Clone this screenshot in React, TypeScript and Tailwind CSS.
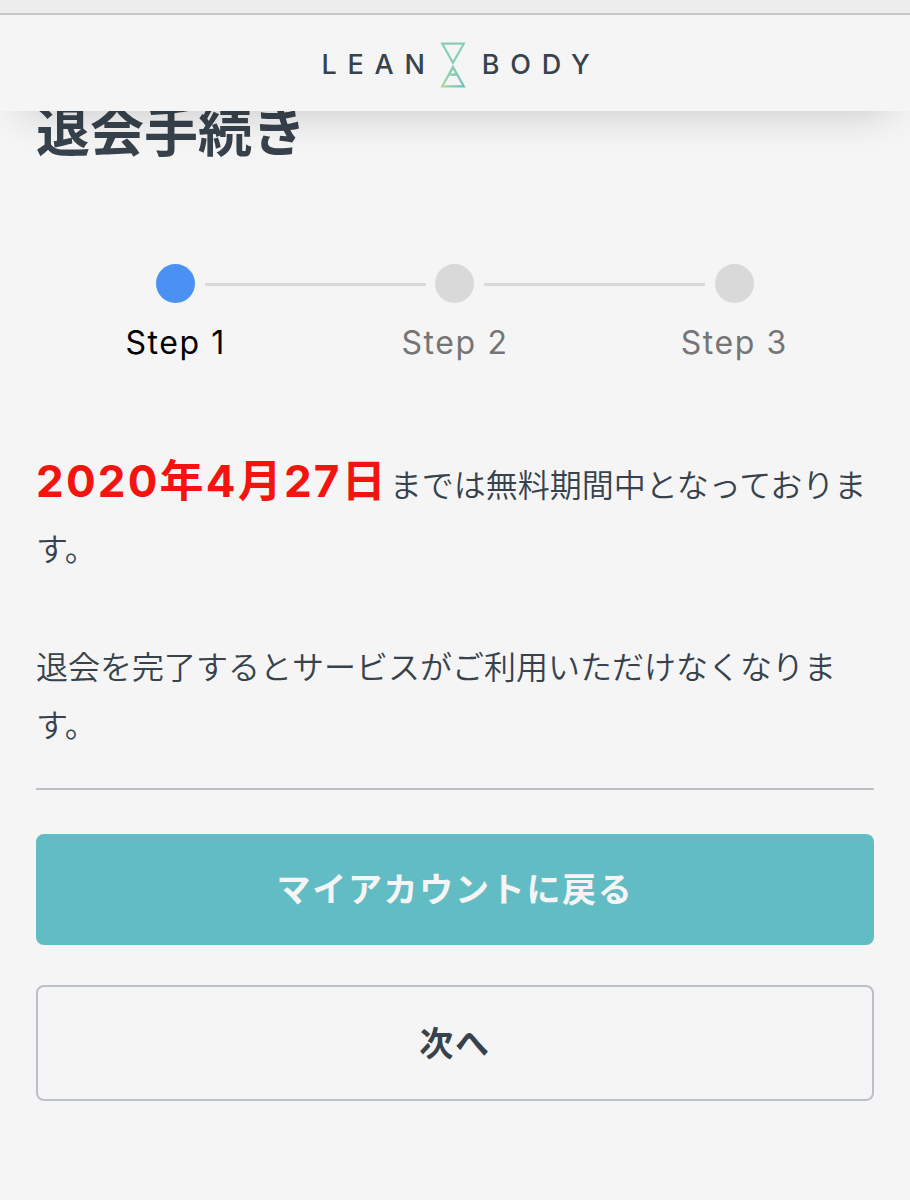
const steps = [
  { label: 'Step 1', active: true },
  { label: 'Step 2', active: false },
  { label: 'Step 3', active: false },
];

function HourglassMark() {
  return (
    <svg width="26" height="46" viewBox="0 0 26 46" fill="none" strokeWidth="2.2" aria-hidden="true">
      <defs>
        <linearGradient id="mark" x1="0" y1="46" x2="26" y2="46" gradientUnits="userSpaceOnUse">
          <stop offset="0" stopColor="#b9d795" />
          <stop offset="0.5" stopColor="#86cfae" />
          <stop offset="1" stopColor="#5fbfc4" />
        </linearGradient>
        <linearGradient id="fade" x1="0" y1="24" x2="0" y2="44" gradientUnits="userSpaceOnUse">
          <stop offset="0" stopColor="#86cfb4" />
          <stop offset="1" stopColor="#86cfb4" stopOpacity="0" />
        </linearGradient>
      </defs>
      <path d="M2.2 1.7H23.8L13 20.8Z" stroke="#86cfb4" />
      <path d="M2.2 44.3H23.8L13 25.2ZM9 32.6H17" stroke="url(#mark)" />
      <path d="M2.2 44.3L13 25.2L23.8 44.3M9 32.6H17" stroke="url(#fade)" />
    </svg>
  );
}

function Header() {
  return (
    <header className="relative z-10 bg-[#f5f5f5] shadow-[0_20px_44px_-20px_rgba(0,0,0,0.2)]">
      <div className="h-[15px] border-b-2 border-[#c6c6c6] bg-[#ededed]" />
      <a
        href="#"
        aria-label="LEAN BODY"
        className="flex h-24 items-center justify-center gap-1 pt-1 pl-3 text-[27px] font-medium"
      >
        <span className="tracking-[0.4em]">LEAN</span>
        <HourglassMark />
        <span className="ml-3 tracking-[0.4em]">BODY</span>
      </a>
    </header>
  );
}

function StepIndicator() {
  return (
    <ol className="mt-[95px] grid grid-cols-3 text-[32px] leading-12 tracking-wider">
      {steps.map((step, i) => (
        <li key={step.label} className="relative flex flex-col items-center gap-4">
          <span
            className={step.active ? 'size-[39px] rounded-full bg-[#4b91f4]' : 'size-[39px] rounded-full bg-[#d9d9d9]'}
          />
          {i > 0 && (
            <span className="absolute top-[19px] right-[calc(50%+29px)] left-[calc(-50%+29px)] h-[3px] bg-[#d9d9d9]" />
          )}
          <span className={step.active ? 'text-black' : 'text-[#757575]'}>{step.label}</span>
        </li>
      ))}
    </ol>
  );
}

export default function App() {
  return (
    <div className="min-h-screen bg-[#f5f5f5] font-['Inter','Noto_Sans_CJK_JP',sans-serif] text-[#37424c]" lang="ja">
      <Header />

      <main className="px-9 pb-24">
        <h1 className="-mt-3.5 text-[54px] leading-[72px] font-bold">退会手続き</h1>

        <StepIndicator />

        <div className="mt-[74px] text-[32px] leading-[58px] font-[350]">
          <p>
            <strong className="mr-0.5 text-[44px] leading-[80px] font-bold tracking-wider text-[#f3130f]">
              2020年4月27日
            </strong>
            までは無料期間中となっております。
          </p>
          <p className="mt-[60px]">退会を完了するとサービスがご利用いただけなくなります。</p>
        </div>

        <hr className="mt-[33px] border-t-2 border-[#bfbfc8]" />

        <button
          type="button"
          className="mt-11 block h-[111px] w-full rounded-lg bg-[#62bcc3] text-[34px] font-bold tracking-wider text-[#f5f5f5]"
        >
          マイアカウントに戻る
        </button>
        <button
          type="button"
          className="mt-10 block h-[116px] w-full rounded-lg border-2 border-[#bbbfca] text-[34px] font-bold tracking-wider"
        >
          次へ
        </button>
      </main>
    </div>
  );
}
